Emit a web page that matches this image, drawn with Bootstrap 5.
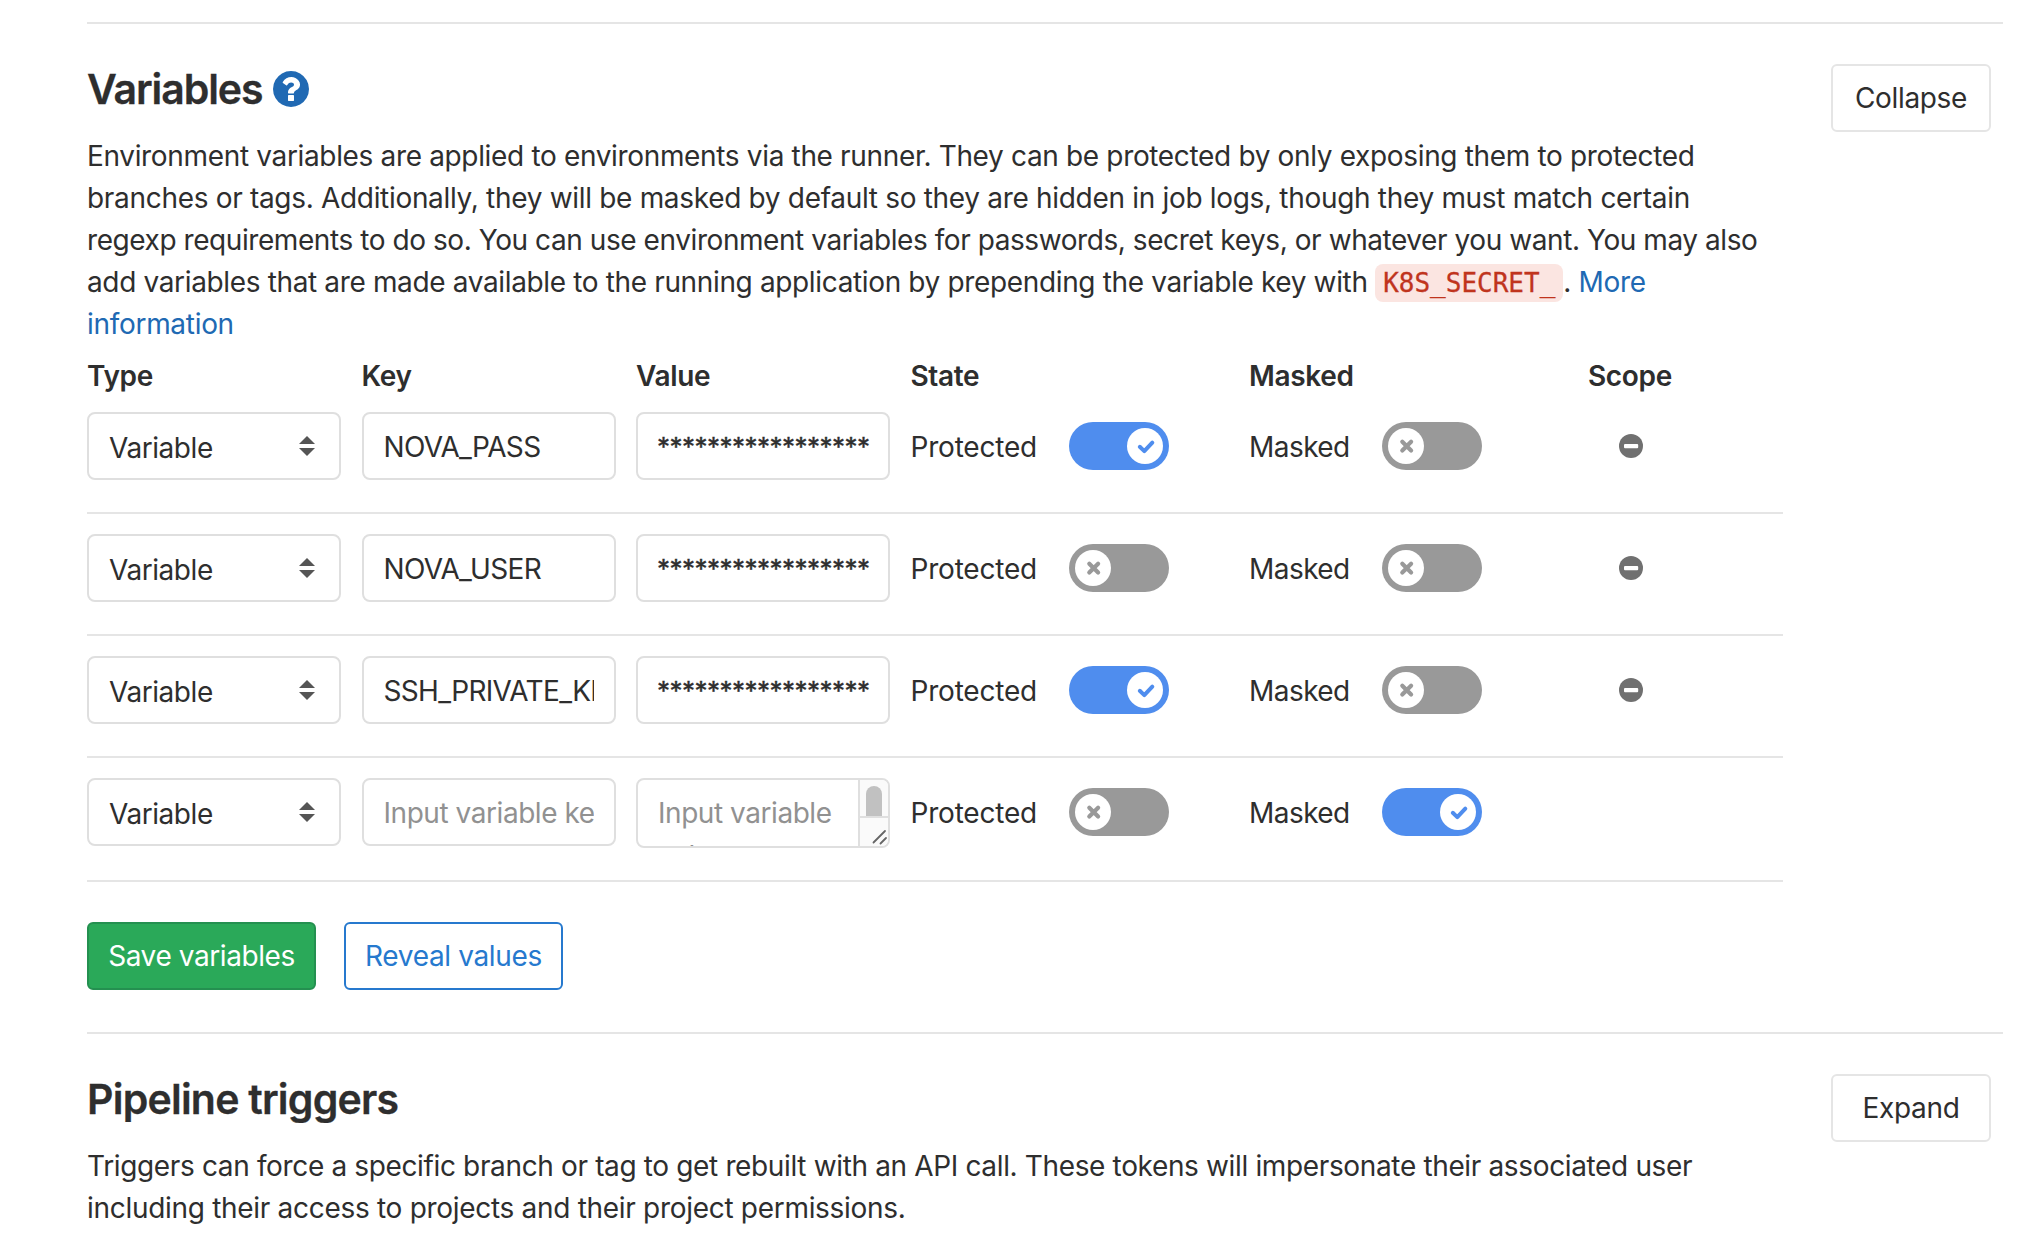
<!DOCTYPE html>
<html lang="en">
<head>
<meta charset="utf-8">
<title>CI / CD Settings</title>
<link href="https://cdn.jsdelivr.net/npm/bootstrap@5.3.0/dist/css/bootstrap.min.css" rel="stylesheet">
<style>
body{font-family:Inter,"Liberation Sans",sans-serif;font-size:28px;line-height:42px;color:#2e2e2e;background:#fff;letter-spacing:-.3px;overflow:hidden}
.settings-page{padding:22px 39px 0 87px}
.settings-section{border-top:2px solid #e5e5e5;padding:40px 12px 0 0}
.section-title{font-size:41px;line-height:48px;font-weight:600;margin:1px 0 22px;letter-spacing:-1.07px;-webkit-text-stroke:.3px #2e2e2e}
.title-tight{letter-spacing:-.77px}
.section-body{width:1696px}
.line{display:block;white-space:nowrap;height:42px}
.l1{letter-spacing:-.34px}.l2{letter-spacing:-.313px}.l3{letter-spacing:-.43px}.l4{letter-spacing:-.355px}.t1{letter-spacing:-.355px}.t2{letter-spacing:-.3px}
.link-blue{color:#2069b3;text-decoration:none}
.key-code{font-family:"DejaVu Sans Mono",monospace;font-size:26px;line-height:1;letter-spacing:0;color:#c0341d;background:#fbe5e1;border-radius:8px;padding:4px 8px;-webkit-text-stroke:.3px #c0341d}
.help-icon{width:36px;height:36px;fill:#2069b3;margin-left:11px}
.var-grid{display:grid;grid-template-columns:274.5px 274.5px 274.5px 338.5px 339px 1fr}
.var-head{font-weight:600;letter-spacing:-.35px;margin:10px 0 15px}
.var-row{border-bottom:2px solid #e5e5e5;padding-bottom:32px;margin-bottom:20px;align-items:start}
.var-row:last-child{margin-bottom:0}
.field{width:254px;position:relative}
.field .form-control,.field .form-select{height:68px;border:2px solid #dfdfdf;border-radius:8px;padding:2px 20px 0;font-size:28px;line-height:42px;letter-spacing:-.68px;color:#2e2e2e;background-color:#fff;background-image:none}
.field .form-select{padding-top:3px;letter-spacing:-.45px}
.field .form-control::placeholder{color:#919191;opacity:1;letter-spacing:-.45px}
.field .value-mask{font-size:26px;letter-spacing:-.53px;padding:0 10px 0 19px;-webkit-text-stroke:.4px #2e2e2e}
.field textarea.form-control{display:block;height:70px;line-height:43px;padding:11.5px 44px 0 20px;resize:none;overflow:hidden}
.sort-arrows{position:absolute;left:212px;top:24px;width:16px;height:20px;fill:#555}
.scroll-track{position:absolute;right:1px;top:1px;width:32px;height:68px}
.state-label{width:158.5px;padding-top:1px;letter-spacing:-.2px}
.mask-label{width:133px;padding-top:1px;letter-spacing:-.55px}
.switch-pill{width:100px;height:48px;border-radius:24px;background:#999;padding:6px;display:flex}
.switch-pill.is-on{background:#4f8dee;justify-content:flex-end}
.switch-knob{width:36px;height:36px;fill:none;stroke:#999;stroke-width:4.2;stroke-linecap:round;stroke-linejoin:round}
.is-on .switch-knob{stroke:#4f8dee;stroke-width:4}
.cell{height:68px;display:flex;align-items:center}
.minus-icon{width:24px;height:24px;margin-left:30.5px}
.page-btn{height:68px;font-size:28px;line-height:42px;border-width:2px;border-radius:6px;padding:0;letter-spacing:-.35px;white-space:nowrap}
.btn-plain{width:160px;color:#2e2e2e;background:#fff;border-color:#e5e5e5;flex:none}
.btn-save{width:229px;color:#fff;background:#2aa959;border-color:#249050;letter-spacing:-.42px}
.btn-reveal{width:219px;color:#2679ce;background:#fff;border-color:#2679ce}
.actions{margin:40px 0 42px;gap:28px}
</style>
<script src="https://cdn.jsdelivr.net/npm/bootstrap@5.3.0/dist/js/bootstrap.bundle.min.js"></script>
</head>
<body>
<svg class="d-none">
  <symbol id="sort" viewBox="0 0 16 20"><path d="M8 0l8 8H0zM8 20l8-8H0z"/></symbol>
  <symbol id="knob-on" viewBox="0 0 36 36"><circle cx="18" cy="18" r="18" fill="#fff" stroke="none"/><path d="M12.8 18.8l4.500 4.300 8-8.500"/></symbol>
  <symbol id="knob-off" viewBox="0 0 36 36"><circle cx="18" cy="18" r="18" fill="#fff" stroke="none"/><path d="M14.3 13.700l8.800 8.800M23.100 13.700l-8.800 8.800"/></symbol>
  <symbol id="minus" viewBox="0 0 24 24"><circle cx="12" cy="12" r="12" fill="#707070"/><rect x="5" y="10" width="14.2" height="4.2" rx="1" fill="#fff"/></symbol>
</svg>
<main class="settings-page">
  <section class="settings-section d-flex justify-content-between align-items-start">
    <div class="section-body">
      <h4 class="section-title d-flex align-items-center"><span>Variables</span><svg class="help-icon" viewBox="0 0 1536 1536"><path fill-rule="evenodd" d="M896 1248v-192q0-14-9-23t-23-9H672q-14 0-23 9t-9 23v192q0 14 9 23t23 9h192q14 0 23-9t9-23zm256-672q0-88-55.500-163T958 297t-170-41q-243 0-371 213-15 24 8 42l132 100q7 6 19 6 16 0 25-12 53-68 86-92 34-24 86-24 48 0 85.500 26t37.500 59q0 38-20 61t-68 45q-63 28-115.500 86.500T640 892v36q0 14 9 23t23 9h192q14 0 23-9t9-23q0-19 21.500-49.500T972 829q32-18 49-28.500t46-35 44.500-48 28-60.500 12.500-81zM1536 768q0 209-103 385.500T1153.500 1433 768 1536t-385.500-103T103 1153.500 0 768t103-385.500T382.500 103 768 0t385.500 103T1433 382.500 1536 768z"/></svg></h4>
      <p class="m-0">
        <span class="line l1">Environment variables are applied to environments via the runner. They can be protected by only exposing them to protected</span>
        <span class="line l2">branches or tags. Additionally, they will be masked by default so they are hidden in job logs, though they must match certain</span>
        <span class="line l3">regexp requirements to do so. You can use environment variables for passwords, secret keys, or whatever you want. You may also</span>
        <span class="line l4">add variables that are made available to the running application by prepending the variable key with <code class="key-code">K8S_SECRET_</code>. <a class="link-blue" href="#">More</a></span>
        <a class="line link-blue" href="#">information</a>
      </p>
      <div class="var-grid var-head"><div>Type</div><div>Key</div><div>Value</div><div>State</div><div>Masked</div><div>Scope</div></div>
      <div id="rows"></div>
      <div class="actions d-flex">
        <button class="btn page-btn btn-save">Save variables</button>
        <button class="btn page-btn btn-reveal">Reveal values</button>
      </div>
    </div>
    <button class="btn page-btn btn-plain">Collapse</button>
  </section>
  <section class="settings-section d-flex justify-content-between align-items-start">
    <div class="section-body">
      <h4 class="section-title title-tight">Pipeline triggers</h4>
      <p class="m-0">
        <span class="line t1">Triggers can force a specific branch or tag to get rebuilt with an API call. These tokens will impersonate their associated user</span>
        <span class="line t2">including their access to projects and their project permissions.</span>
      </p>
    </div>
    <button class="btn page-btn btn-plain">Expand</button>
  </section>
</main>
<script>
const vars = [
  {key: "NOVA_PASS", prot: true, masked: false},
  {key: "NOVA_USER", prot: false, masked: false},
  {key: "SSH_PRIVATE_KEY", prot: true, masked: false},
  {key: "", prot: false, masked: true}
];
const pill = on => `<div class="switch-pill${on ? " is-on" : ""}"><svg class="switch-knob"><use href="#knob-${on ? "on" : "off"}"/></svg></div>`;
const valueField = v => v.key
  ? `<input class="form-control value-mask" value="${"*".repeat(17)}">`
  : `<textarea class="form-control" placeholder="Input variable value"></textarea>
     <svg class="scroll-track" viewBox="0 0 32 68">
       <path d="M3 1h22a6 6 0 0 1 6 6v54a6 6 0 0 1-6 6H3z" fill="#fafafa"/>
       <path d="M2 1v66M2 38h29" stroke="#dfdfdf" stroke-width="2" fill="none"/>
       <path d="M9 37V15a8 8 0 0 1 16 0v22z" fill="#c1c1c1"/>
       <path d="M16.500 63.500l11.500-11.500M23.500 64.500l5.500-5.500" stroke="#666" stroke-width="1.800" stroke-linecap="round"/>
     </svg>`;
document.getElementById("rows").innerHTML = vars.map(v => `
  <div class="var-grid var-row">
    <div class="field"><select class="form-select"><option>Variable</option></select><svg class="sort-arrows"><use href="#sort"/></svg></div>
    <div class="field"><input class="form-control" value="${v.key}" placeholder="Input variable key"></div>
    <div class="field">${valueField(v)}</div>
    <div class="cell"><span class="state-label">Protected</span>${pill(v.prot)}</div>
    <div class="cell"><span class="mask-label">Masked</span>${pill(v.masked)}</div>
    <div class="cell">${v.key ? '<svg class="minus-icon"><use href="#minus"/></svg>' : ""}</div>
  </div>`).join("");
</script>
</body>
</html>
